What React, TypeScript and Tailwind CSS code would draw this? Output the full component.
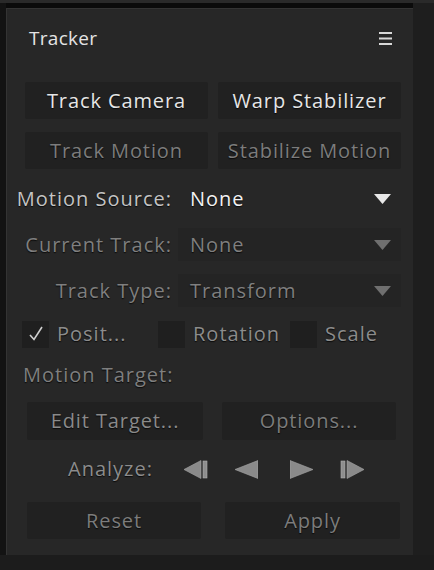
import React from 'react';

const font = { fontFamily: '"Open Sans", "Liberation Sans", sans-serif' };

const emboss = '[text-shadow:0_1px_1px_#0a0a0a]';

const Btn: React.FC<{ label: string; disabled?: boolean; className?: string }> = ({
  label,
  disabled,
  className = '',
}) => (
  <div
    className={`flex items-center justify-center rounded-[2px] bg-[#212121] text-[20px] tracking-[0.9px] ${emboss} ${
      disabled ? 'text-[#7c7c7c]' : 'text-[#e6e6e6]'
    } ${className}`}
  >
    {label}
  </div>
);

const Caret: React.FC<{ dim?: boolean }> = ({ dim }) => (
  <svg width="17" height="10" viewBox="0 0 17 10" className="shrink-0">
    <polygon points="0,0 17,0 8.5,10" fill={dim ? '#6f6f6f' : '#e8e8e8'} />
  </svg>
);

const SelectRow: React.FC<{
  label: string;
  value: string;
  dim?: boolean;
  className?: string;
}> = ({ label, value, dim, className = '' }) => (
  <div className={`flex h-[33px] items-center ${className}`}>
    <div
      className={`w-[165px] shrink-0 text-right text-[20px] tracking-[1px] ${emboss} ${
        dim ? 'text-[#7f7f7f]' : 'text-[#c4c4c4]'
      }`}
    >
      {label}
    </div>
    <div
      className={`ml-[6px] flex h-full flex-1 items-center justify-between pl-[12px] pr-[10px] ${
        dim ? 'bg-[#242424]' : ''
      }`}
    >
      <span
        className={`text-[20px] tracking-[1px] ${emboss} ${
          dim ? 'text-[#7f7f7f]' : 'text-[#f2f2f2]'
        }`}
      >
        {value}
      </span>
      <Caret dim={dim} />
    </div>
  </div>
);

const Check: React.FC<{ checked?: boolean }> = ({ checked }) => (
  <div className="flex h-[27px] w-[27px] shrink-0 items-center justify-center bg-[#1f1f1f]">
    {checked && (
      <svg width="20" height="20" viewBox="0 0 20 20">
        <path d="M4 11 L8 15.5 L16 3" fill="none" stroke="#cfcfcf" strokeWidth="1.6" />
      </svg>
    )}
  </div>
);

const Tri: React.FC<{ dir: 'l' | 'r'; bar?: boolean }> = ({ dir, bar }) => (
  <svg width={bar ? 24 : 23} height="19" viewBox={bar ? '0 0 24 19' : '0 0 23 19'}>
    {dir === 'l' && bar && (
      <>
        <polygon points="0,9.5 17,0.5 17,18.5" fill="#8a8a8a" stroke="#a6a6a6" strokeWidth="0.6" />
        <rect x="19" y="1" width="4" height="17" fill="#8e8e8e" stroke="#b0b0b0" strokeWidth="0.6" />
      </>
    )}
    {dir === 'r' && bar && (
      <>
        <rect x="1" y="1" width="4" height="17" fill="#8e8e8e" stroke="#b0b0b0" strokeWidth="0.6" />
        <polygon points="7,0.5 24,9.5 7,18.5" fill="#8a8a8a" stroke="#a6a6a6" strokeWidth="0.6" />
      </>
    )}
    {dir === 'l' && !bar && (
      <polygon points="0,9.5 23,0.5 23,18.5" fill="#8a8a8a" stroke="#a6a6a6" strokeWidth="0.6" />
    )}
    {dir === 'r' && !bar && (
      <polygon points="0,0.5 23,9.5 0,18.5" fill="#8a8a8a" stroke="#a6a6a6" strokeWidth="0.6" />
    )}
  </svg>
);

export default function App() {
  return (
    <div className="flex h-[570px] w-[434px] flex-col bg-[#1d1d1d]" style={font}>
      <div className="h-[3px] bg-[#2a2a2a]" />
      <div className="flex flex-1">
        <div className="w-[6px] bg-[#131313]" />
        <div className="flex h-[552px] w-[407px] flex-col">
          <div className="h-[5px] bg-[#0b0b0b]" />
          <div className="flex flex-1 flex-col border-t border-l border-[#343434] bg-[#272727]">
            {/* header */}
            <div className="flex h-[58px] items-center justify-between pl-[22px] pr-[20px] pt-[1px]">
              <span className="text-[19px] tracking-[0.3px] text-[#e4e4e4]">Tracker</span>
              <svg width="14" height="15" viewBox="0 0 14 15">
                <rect x="0" y="1" width="13" height="2" fill="#d8d8d8" />
                <rect x="0" y="6.5" width="13" height="2" fill="#d8d8d8" />
                <rect x="0" y="12" width="13" height="2" fill="#d8d8d8" />
              </svg>
            </div>

            <div className="mt-[15px] grid grid-cols-2 gap-x-[10px] gap-y-[13px] pl-[18px] pr-[12px]">
              <Btn label="Track Camera" className="h-[37px]" />
              <Btn label="Warp Stabilizer" className="h-[37px]" />
              <Btn label="Track Motion" disabled className="h-[37px]" />
              <Btn label="Stabilize Motion" disabled className="h-[37px]" />
            </div>

            <div className="mt-[13px] flex flex-col gap-[13px] pr-[12px]">
              <SelectRow label="Motion Source:" value="None" />
              <SelectRow label="Current Track:" value="None" dim />
              <SelectRow label="Track Type:" value="Transform" dim />
            </div>

            <div className={`mt-[13px] flex h-[28px] items-center pl-[15px] text-[20px] tracking-[1px] text-[#8c8c8c] ${emboss}`}>
              <Check checked />
              <span className="ml-[8px] w-[101px]">Posit...</span>
              <Check />
              <span className="ml-[8px] w-[97px]">Rotation</span>
              <Check />
              <span className="ml-[8px]">Scale</span>
            </div>

            <div className={`mt-[13px] pl-[16px] text-[20px] leading-[28px] tracking-[1px] text-[#7f7f7f] ${emboss}`}>
              Motion Target:
            </div>

            <div className="mt-[13px] grid grid-cols-[176px_174px] gap-x-[19px] pl-[20px]">
              <Btn label="Edit Target..." disabled className="h-[38px] text-[#8a8a8a]" />
              <Btn label="Options..." disabled className="h-[38px]" />
            </div>

            <div className="mt-[14px] flex h-[30px] items-center">
              <span className={`ml-[61px] w-[116px] text-[20px] tracking-[1px] text-[#8c8c8c] ${emboss}`}>
                Analyze:
              </span>
              <Tri dir="l" bar />
              <span className="ml-[27px]" />
              <Tri dir="l" />
              <span className="ml-[32px]" />
              <Tri dir="r" />
              <span className="ml-[27px]" />
              <Tri dir="r" bar />
            </div>

            <div className="mt-[18px] grid grid-cols-[174px_175px] gap-x-[24px] pl-[20px]">
              <Btn label="Reset" disabled className="h-[37px]" />
              <Btn label="Apply" disabled className="h-[37px]" />
            </div>
          </div>
        </div>
        <div className="flex-1 bg-[#1e1e1e]" />
      </div>
      <div className="h-[15px] bg-[#1c1c1c]" />
    </div>
  );
}
